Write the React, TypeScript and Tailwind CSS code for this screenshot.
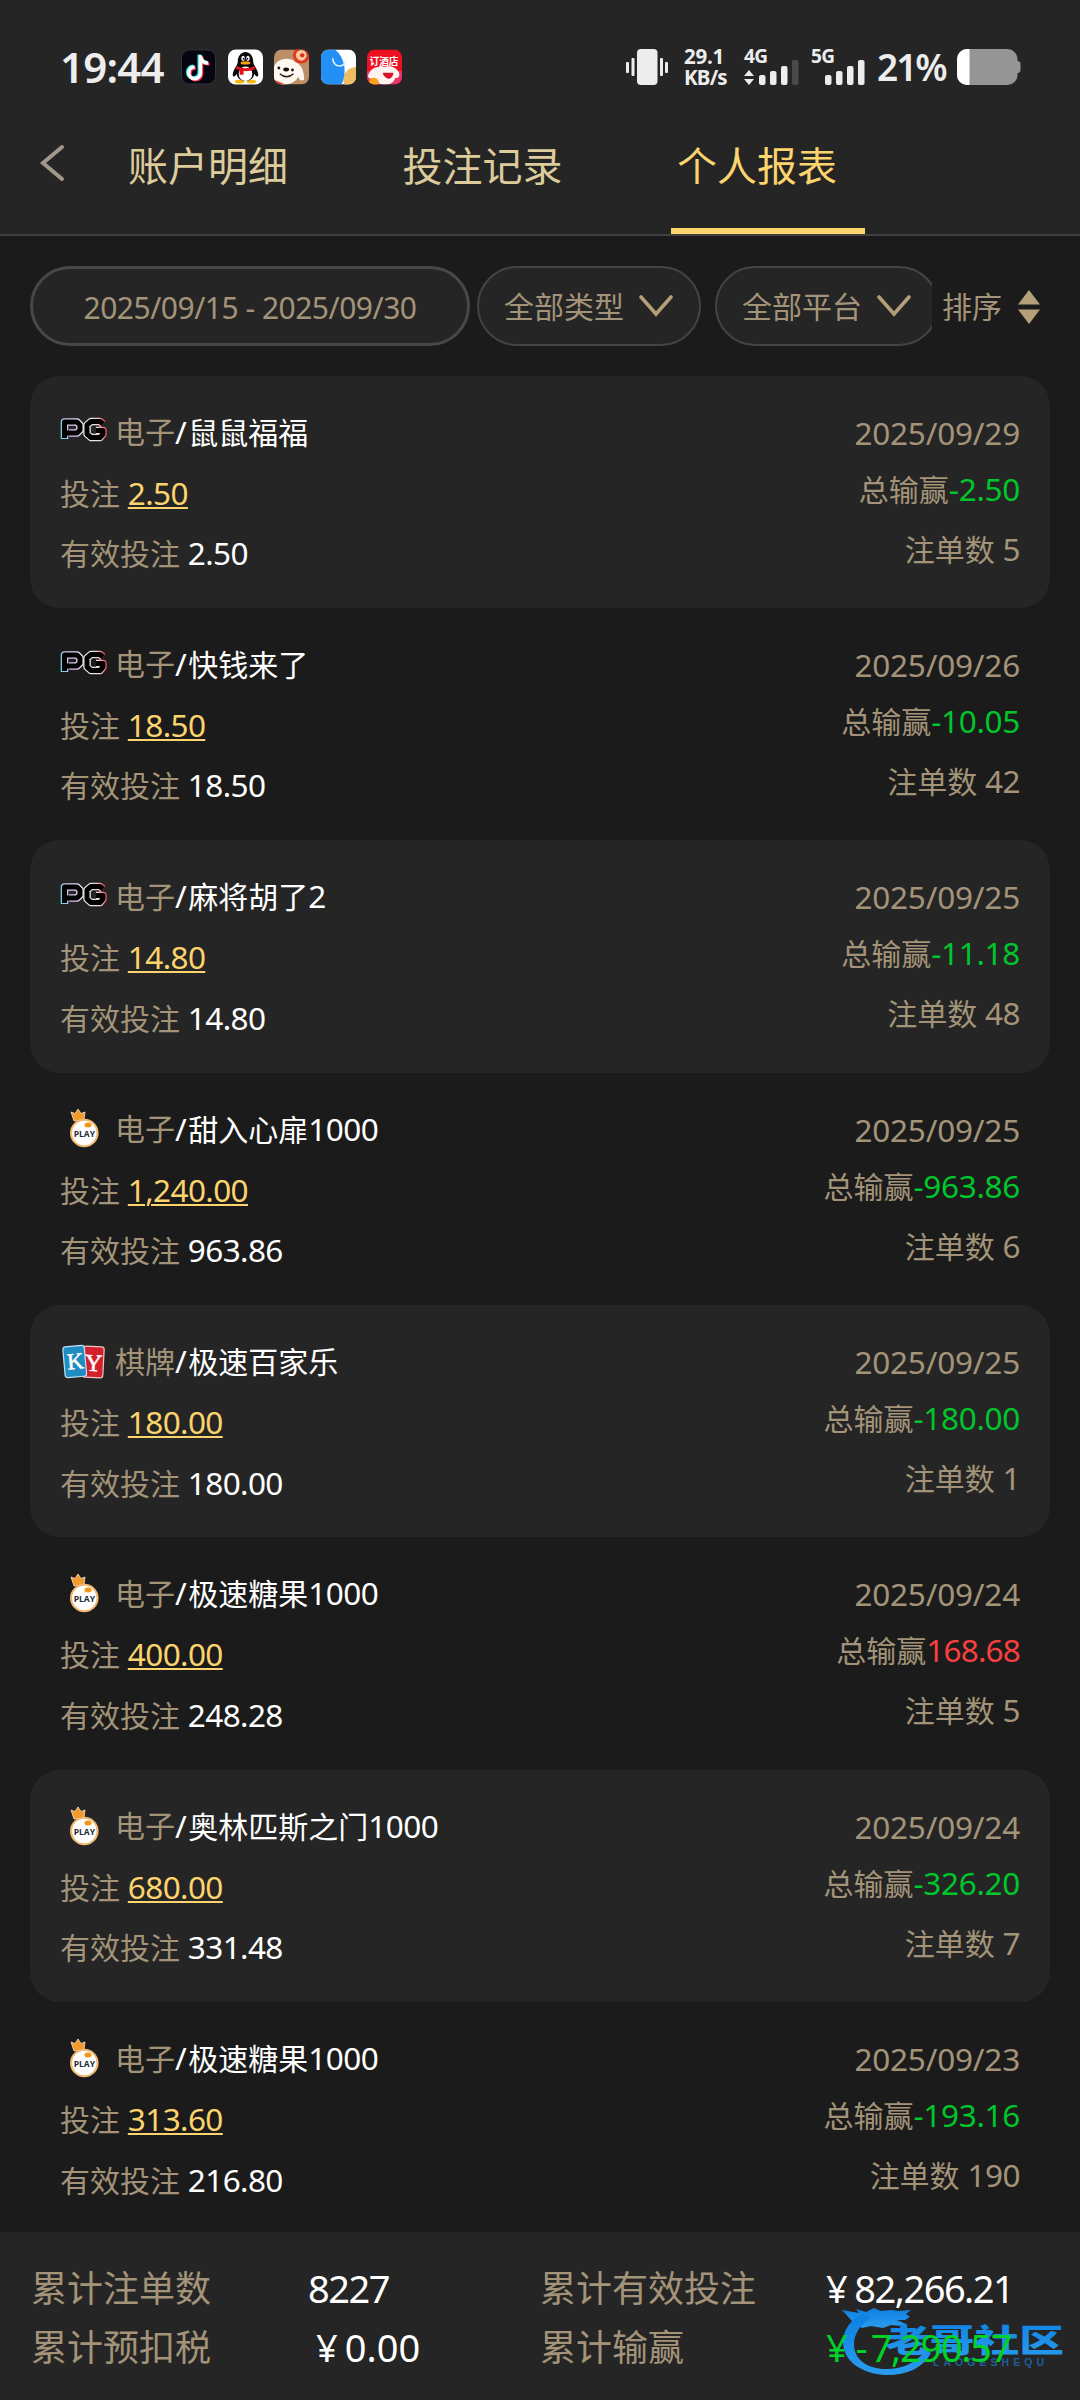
import React from 'react';

const tabs = [
  { name: '账户明细', active: false },
  { name: '投注记录', active: false },
  { name: '个人报表', active: true },
];

const records = [
  { brand: 'pg', type: '电子', game: '鼠鼠福福', tail: '', bet: '2.50', valid: '2.50', date: '2025/09/29', result: '-2.50', count: '5' },
  { brand: 'pg', type: '电子', game: '快钱来了', tail: '', bet: '18.50', valid: '18.50', date: '2025/09/26', result: '-10.05', count: '42' },
  { brand: 'pg', type: '电子', game: '麻将胡了', tail: '2', bet: '14.80', valid: '14.80', date: '2025/09/25', result: '-11.18', count: '48' },
  { brand: 'play', type: '电子', game: '甜入心扉', tail: '1000', bet: '1,240.00', valid: '963.86', date: '2025/09/25', result: '-963.86', count: '6' },
  { brand: 'ky', type: '棋牌', game: '极速百家乐', tail: '', bet: '180.00', valid: '180.00', date: '2025/09/25', result: '-180.00', count: '1' },
  { brand: 'play', type: '电子', game: '极速糖果', tail: '1000', bet: '400.00', valid: '248.28', date: '2025/09/24', result: '168.68', count: '5' },
  { brand: 'play', type: '电子', game: '奥林匹斯之门', tail: '1000', bet: '680.00', valid: '331.48', date: '2025/09/24', result: '-326.20', count: '7' },
  { brand: 'play', type: '电子', game: '极速糖果', tail: '1000', bet: '313.60', valid: '216.80', date: '2025/09/23', result: '-193.16', count: '190' },
];

function AppIcons() {
  return (
    <div className="flex gap-[11.5px]">
      <svg width="35" height="36" viewBox="0 0 36 36">
        <rect x="0.5" y="0.5" width="35" height="35" rx="8" fill="#05060f" stroke="#33343c" />
        <g fill="none" strokeWidth="3.600">
          <path d="M20 6v18a6 6 0 1 1-6-6M20 7c1 5 4 7 8 7" stroke="#25f4ee" transform="translate(-1.2 -0.8)" />
          <path d="M20 6v18a6 6 0 1 1-6-6M20 7c1 5 4 7 8 7" stroke="#fe2c55" transform="translate(1.2 1)" />
          <path d="M20 6v18a6 6 0 1 1-6-6M20 7c1 5 4 7 8 7" stroke="#fff" />
        </g>
      </svg>
      <svg width="35" height="36" viewBox="0 0 36 36">
        <rect width="36" height="36" rx="8" fill="#fff" />
        <ellipse cx="12" cy="33" rx="5" ry="2" fill="#f5b90b" />
        <ellipse cx="24" cy="33" rx="5" ry="2" fill="#f5b90b" />
        <path d="M10 13c0-14 16-14 16 0 0 3 6 9 5 14-1 2-3 0-4-2-1 10-17 10-18 0-1 2-3 4-4 2-1-5 5-11 5-14z" fill="#0b0b0b" />
        <ellipse cx="18" cy="25" rx="7" ry="7.500" fill="#fff" />
        <ellipse cx="15.500" cy="9" rx="1.800" ry="2.700" fill="#fff" />
        <ellipse cx="20.500" cy="9" rx="1.800" ry="2.700" fill="#fff" />
        <circle cx="16" cy="9.500" r="0.900" />
        <circle cx="20" cy="9.500" r="0.900" />
        <ellipse cx="18" cy="13.800" rx="5" ry="1.600" fill="#f5a20b" />
        <path d="M9 17c6 3 12 3 18 0l1 3c-4 2-8 2.500-12 2.200V26h-4v-5l-4-1z" fill="#e60f1e" />
      </svg>
      <svg width="35" height="36" viewBox="0 0 36 36">
        <defs>
          <clipPath id="dog"><rect width="36" height="36" rx="8" /></clipPath>
        </defs>
        <g clipPath="url(#dog)">
          <rect width="36" height="36" fill="#bd8f66" />
          <path d="M0 18C3 9 16 7 22 13c8 3 9 12 9 18-3 2-5 0-6-3-3 6-11 9-18 8l-7-4z" fill="#fff8f0" />
          <circle cx="28" cy="6" r="8.500" fill="#e2361f" />
          <circle cx="28" cy="6" r="5.500" fill="#f6c9a0" />
          <circle cx="29" cy="6" r="2.200" fill="#d82b1c" />
          <circle cx="5" cy="19" r="1.500" fill="#2b1a14" />
          <circle cx="19" cy="21" r="1.500" fill="#2b1a14" />
          <ellipse cx="12.500" cy="20.500" rx="3" ry="2" fill="#171010" />
          <path d="M6 25c4 4 10 4 14 0" fill="none" stroke="#2b1a14" strokeWidth="1.400" />
          <path d="M0 31l12 5H0z" fill="#e0402c" />
        </g>
      </svg>
      <svg width="35" height="36" viewBox="0 0 36 36">
        <defs>
          <clipPath id="ali"><rect width="36" height="36" rx="8" /></clipPath>
        </defs>
        <g clipPath="url(#ali)">
          <rect width="36" height="36" fill="#fff" />
          <circle cx="36" cy="31" r="13" fill="#eebd63" />
          <path d="M0 0h14c9 6 14 22 7 36H0z" fill="#2490f5" />
          <path d="M12 9c1 10 12 11 14 1" fill="none" stroke="#e8f4ff" strokeWidth="1.600" />
        </g>
      </svg>
      <svg width="35" height="36" viewBox="0 0 36 36">
        <defs>
          <clipPath id="hotel"><rect width="36" height="36" rx="8" /></clipPath>
        </defs>
        <g clipPath="url(#hotel)">
          <rect width="36" height="36" fill="#ee1020" />
          <path d="M0 22h36v14H0z" fill="#e8336c" />
          <path d="M1 27c2-6 6-9 11-9l2-2 3 2c7-2 13 0 16 6 1 4-1 6-4 5-1 5-5 7-11 7s-9-3-10-7c-3 2-7 1-7-2z" fill="#fff4f2" />
          <text x="2.500" y="16" fontSize="10" fontWeight="700" fill="#fff" fontFamily="Noto Sans CJK SC">订酒店</text>
          <path d="M16 24h11c0 8-9 8-11 0z" fill="#d8122a" />
          <circle cx="7" cy="34" r="5" fill="#f8a21c" />
        </g>
      </svg>
    </div>
  );
}

function Bars({ dim }: { dim: boolean }) {
  return (
    <svg width="40" height="25" viewBox="0 0 40 25" fill="#ededed">
      <rect x="0" y="15" width="6.500" height="10" rx="2" />
      <rect x="11" y="11" width="6.500" height="14" rx="2" />
      <rect x="22" y="6" width="6.500" height="19" rx="2" />
      <rect x="33" y="0" width="6.500" height="25" rx="2" fill={dim ? '#4a4a4a' : '#ededed'} />
    </svg>
  );
}

function StatusBar() {
  return (
    <div className="flex h-[134px] items-center justify-between pl-[60px] pr-[59px] font-bold text-[#ededed]">
      <div className="flex items-center">
        <span className="w-[121px] text-[42px] leading-none font-semibold tracking-[-0.8px]">19:44</span>
        <AppIcons />
      </div>
      <div className="flex h-9 items-center">
        <svg width="43" height="36" viewBox="0 0 43 36" fill="#ededed">
          <rect x="0" y="13" width="3" height="11" rx="1" />
          <rect x="5.500" y="9" width="3" height="18" rx="1" />
          <rect x="11" y="0" width="20.500" height="36" rx="4" />
          <rect x="34" y="9" width="3" height="18" rx="1" />
          <rect x="39" y="13" width="3" height="11" rx="1" />
        </svg>
        <div className="ml-[15px] flex w-[60px] flex-col text-[20.500px] leading-[21px] tracking-[-0.2px]">
          <span>29.1</span>
          <span className="tracking-[-0.8px]">KB/s</span>
        </div>
        <div className="flex h-9 w-[67px] flex-col">
          <span className="h-[11px] text-[19px] leading-[15px] tracking-[-0.5px]">4G</span>
          <div className="flex items-end gap-[5px]">
            <svg width="10" height="15" viewBox="0 0 10 15" fill="#ededed">
              <path d="M5 0l5 6H0zM5 15l5-6H0z" />
            </svg>
            <Bars dim />
          </div>
        </div>
        <div className="flex h-9 w-[66px] flex-col">
          <span className="h-[11px] text-[19px] leading-[15px] tracking-[-0.5px]">5G</span>
          <div className="pl-[14px]">
            <Bars dim={false} />
          </div>
        </div>
        <span className="w-[80px] text-[37px] leading-9 font-semibold tracking-[-2px]">21%</span>
        <svg width="64" height="36" viewBox="0 0 64 36">
          <rect x="56" y="12" width="7.500" height="12" rx="3" fill="#959595" />
          <rect width="60.500" height="36" rx="10" fill="#959595" />
          <path d="M12.500 0H10A10 10 0 0 0 0 10v16a10 10 0 0 0 10 10h2.500z" fill="#fff" />
        </svg>
      </div>
    </div>
  );
}

function Chevron() {
  return (
    <svg width="34" height="22" viewBox="0 0 34 22" fill="none" stroke="#b3a078" strokeWidth="3.600" className="shrink-0">
      <path d="M2 2l15 17L32 2" strokeLinecap="round" />
    </svg>
  );
}

function Brand({ name }: { name: string }) {
  if (name === 'pg') {
    return (
      <svg width="48" height="26" viewBox="0 0 48 26" className="-mt-1">
        <defs>
          <linearGradient id="pg" gradientUnits="userSpaceOnUse" x1="0" y1="24" x2="47" y2="14">
            <stop offset="0" stopColor="#4fd8e8" />
            <stop offset="0.250" stopColor="#e0bcf4" />
            <stop offset="0.600" stopColor="#e6f2e6" />
            <stop offset="0.850" stopColor="#f0d0d0" />
            <stop offset="1" stopColor="#f0405c" />
          </linearGradient>
        </defs>
        <g fill="none" strokeLinejoin="round">
          <path d="M4.500 22V5H17L20 8V13L17 16H9" stroke="url(#pg)" strokeWidth="7.600" />
          <path d="M43 7L40 4.500H31L27 8V17L31 20.500H40L43 17V13.500H36" stroke="url(#pg)" strokeWidth="7.600" />
          <path d="M4.500 21V5H17L20 8V13L17 16H5" stroke="#000" strokeWidth="5" />
          <path d="M43 7L40 4.500H31L27 8V17L31 20.500H40L43 17V13.500H36" stroke="#000" strokeWidth="5" />
        </g>
      </svg>
    );
  }
  if (name === 'ky') {
    return (
      <svg width="46" height="36" viewBox="0 0 46 36">
        <rect x="23" y="2.500" width="20.500" height="31" rx="2.500" fill="#d3202b" stroke="#f0c8c8" strokeWidth="1.200" transform="rotate(3 33 18)" />
        <rect x="4" y="2" width="21.500" height="31" rx="2.500" fill="#1f8cc2" stroke="#bfe3f2" strokeWidth="1.200" transform="rotate(-5 15 18)" />
        <text x="7" y="25" fontSize="23" fill="#fff" stroke="#fff" strokeWidth="0.500" fontFamily="Liberation Serif" transform="rotate(-5 14 18)">K</text>
        <text x="25" y="27" fontSize="24" fill="#fff" stroke="#fff" strokeWidth="0.500" fontFamily="Liberation Serif" transform="rotate(3 32 18)">Y</text>
      </svg>
    );
  }
  return (
    <svg width="48" height="40" viewBox="0 0 48 40">
      <path d="M14 12L11 3l4 1.500L18 0l3 4.500L25 3l-1 8z" fill="#f29a2e" stroke="#f8e3c4" strokeWidth="0.800" />
      <circle cx="24.300" cy="24" r="14.300" fill="#f2b870" />
      <circle cx="24.300" cy="24" r="12.200" fill="#fff" />
      <ellipse cx="28" cy="16" rx="3.600" ry="2.500" fill="#f0961c" />
      <text x="24.300" y="27.500" textAnchor="middle" fontSize="8.500" fontWeight="700" fill="#222b3a" fontFamily="Open Sans">PLAY</text>
    </svg>
  );
}

function Num({ children, className = 'tracking-[-0.5px]' }: { children: React.ReactNode; className?: string }) {
  return <span className={`text-[31.5px] ${className}`}>{children}</span>;
}

export default function App() {
  return (
    <div className="flex h-[2400px] w-[1080px] flex-col overflow-hidden bg-[#1b1b1b] font-['Noto_Sans','Noto_Sans_CJK_SC',sans-serif] text-[#a39479]">
      <header className="h-[236px] shrink-0 border-b-2 border-[#404040] bg-[#252525]">
        <StatusBar />
        <div className="flex h-[100px]">
          <button className="flex w-[128px] pt-[9px] pl-[39px]">
            <svg width="26" height="40" viewBox="0 0 26 40" fill="none" stroke="#a1978a" strokeWidth="4">
              <path d="M23 4L4 20l19 16" strokeLinecap="round" />
            </svg>
          </button>
          {tabs.map((tab) => (
            <div
              key={tab.name}
              className={`flex w-[274.500px] flex-col justify-between pt-0.5 text-[40px] leading-[60px] ${
                tab.active ? 'text-[#fbd46d]' : 'text-[#dccb9b]'
              }`}
            >
              <span>{tab.name}</span>
              {tab.active && <div className="-ml-1.5 h-1.5 w-[194px] bg-[#fbd46d]" />}
            </div>
          ))}
        </div>
      </header>

      <div className="flex h-[139.500px] shrink-0 items-start px-[30px] pt-[30px] text-[30px]">
        <div className="flex h-20 w-[440px] items-center justify-center rounded-full border-[3px] border-[#484848] bg-[#252525] pt-0.5 text-[30px] tracking-[-0.5px]">
          2025/09/15 - 2025/09/30
        </div>
        <div className="ml-[7px] flex w-[455px] gap-[14px] overflow-hidden">
          {['全部类型', '全部平台'].map((label) => (
            <div
              key={label}
              className="flex h-20 w-[224px] shrink-0 items-center gap-[15px] rounded-full border-2 border-[#444] bg-[#252525] pl-[25px]"
            >
              <span>{label}</span>
              <Chevron />
            </div>
          ))}
        </div>
        <div className="flex h-20 items-center gap-4 pl-2.5">
          <span>排序</span>
          <svg width="22" height="34" viewBox="0 0 22 34" fill="#b5a07a" className="mt-0.5">
            <path d="M11 0l11 14.500H0zM11 34l11-14.500H0z" />
          </svg>
        </div>
      </div>

      <main className="h-[1856.500px] shrink-0 overflow-hidden px-[30px]">
        {records.map((r, i) => (
          <div
            key={i}
            className={`flex h-[232.400px] justify-between rounded-[30px] px-[30px] text-[30px] ${
              i % 2 === 0 ? 'bg-[#252525]' : ''
            }`}
          >
            <div className="flex flex-col pt-[26.500px] leading-[60.500px]">
              <div className="flex h-[60.500px] items-center">
                <div className="flex w-[55px] items-center">
                  <Brand name={r.brand} />
                </div>
                <span>{r.type}</span>
                <span className="text-white">
                  <Num className="mr-[1.5px]">/</Num>
                  {r.game}
                  <Num>{r.tail}</Num>
                </span>
              </div>
              <div className="h-[60.500px]">
                投注{' '}
                <Num className="tracking-[-0.6px] text-[#fbd46d] underline decoration-2 underline-offset-2">{r.bet}</Num>
              </div>
              <div className="h-[60.500px]">
                有效投注 <Num className="tracking-[-0.6px] text-white">{r.valid}</Num>
              </div>
            </div>
            <div className="flex flex-col items-end pt-[28px] leading-[58px]">
              <div className="h-[56px]">
                <Num className="tracking-[-0.2px]">{r.date}</Num>
              </div>
              <div className="h-[60px]">
                总输赢
                <Num className={r.result.startsWith('-') ? 'tracking-[-0.3px] text-[#00c52b]' : 'tracking-[-0.8px] text-[#f8403f]'}>
                  {r.result}
                </Num>
              </div>
              <div>
                注单数 <Num>{r.count}</Num>
              </div>
            </div>
          </div>
        ))}
      </main>

      <footer className="relative h-[168px] shrink-0 bg-[#252525] text-[36px]">
        <svg className="absolute top-[75px] left-[842px]" width="228" height="74" viewBox="0 0 228 74">
          <defs>
            <linearGradient id="wm" x1="0" y1="0" x2="0" y2="1">
              <stop offset="0" stopColor="#0d80e4" />
              <stop offset="1" stopColor="#2a9cec" />
            </linearGradient>
          </defs>
          {/* dragon head, then the tapering ring of its body */}
          <path
            d="M0 3l17 3-3-4 10 3 8-4 7 3 10-1 8 1 12-1-5 4 4 3-5 3-8 0 9 4-4 2-11-1-8 3-12-2-9 2-10-7z"
            fill="url(#wm)"
          />
          <path
            d="M30 10C19 17 12 26 12 37c0 16 14 25 32 25 18 0 31-7 40-19l5 3C81 61 65 68 45 68 18 67 1 53 1 35 1 23 9 12 20 7z"
            fill="url(#wm)"
          />
          <text x="0" y="0" transform="translate(43 45) scale(1.420 1)" fontSize="31.500" fontWeight="900" fill="url(#wm)" fontFamily="Noto Sans CJK SC">
            老哥社区
          </text>
          <text x="91" y="59" fontSize="10.500" fontWeight="700" fill="#1d5f97" textLength="111" fontFamily="Liberation Sans">
            LAOGESHEQU
          </text>
        </svg>
        <div className="relative flex flex-col pt-[26.500px] pl-[31px] leading-[59px]">
          <div className="flex h-[59px]">
            <span className="w-[277px]">累计注单数</span>
            <span className="w-[232px] text-[38px] tracking-[-1.5px] text-white">8227</span>
            <span className="w-[286px]">累计有效投注</span>
            <span className="flex gap-[8px] text-[38px] tracking-[-1.5px] text-white">
              <span>¥</span>82,266.21
            </span>
          </div>
          <div className="flex h-[59px]">
            <span className="w-[285px]">累计预扣税</span>
            <span className="flex w-[224px] gap-[7px] text-[38px] text-white">
              <span>¥</span>0.00
            </span>
            <span className="w-[286px]">累计输赢</span>
            <span className="flex gap-[9px] text-[38px] tracking-[-1.3px] text-[#00d227]">
              <span>¥</span>
              <span>
                <span className="tracking-[3px]">-</span>7,290.57
              </span>
            </span>
          </div>
        </div>
      </footer>
    </div>
  );
}
